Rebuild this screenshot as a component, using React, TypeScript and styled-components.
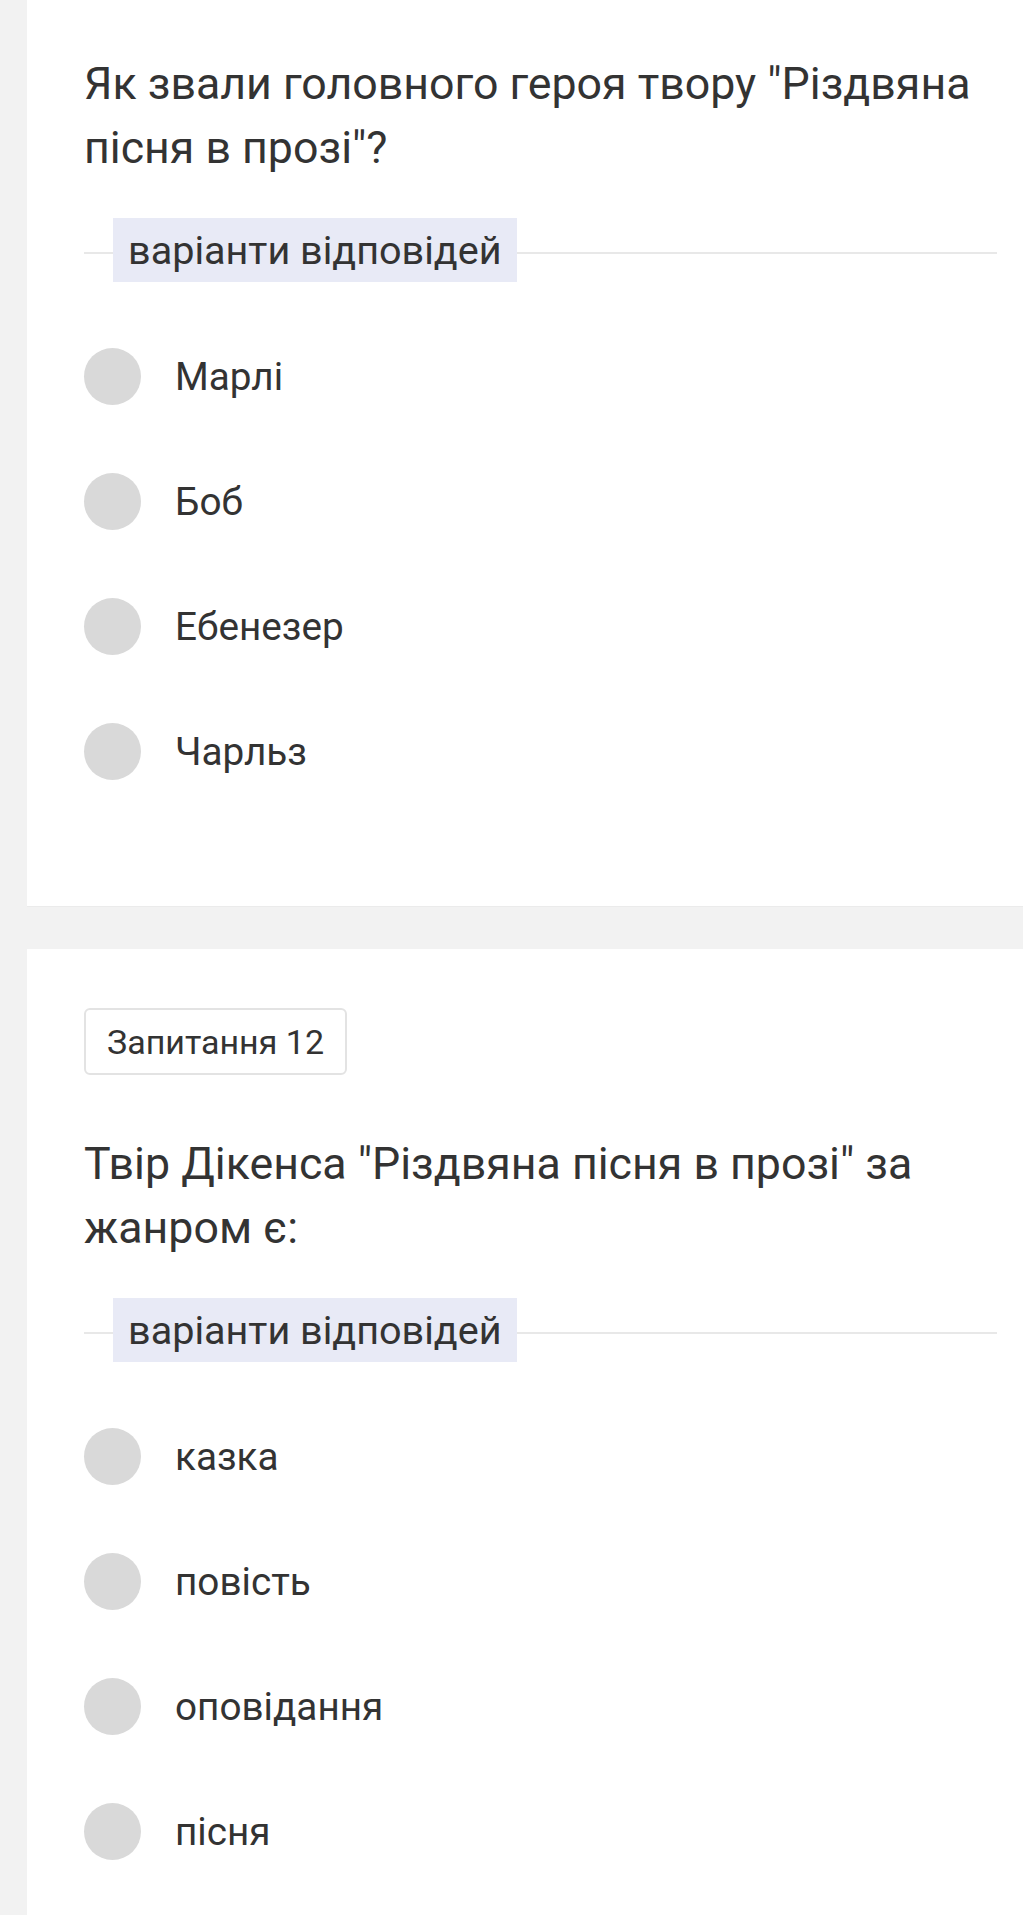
import React from "react"
import styled, { createGlobalStyle } from "styled-components"

const GlobalStyle = createGlobalStyle`
  html, body {
    margin: 0;
    padding: 0;
    background: #f2f2f2;
  }
  body {
    font-family: Roboto, "Noto Sans", "Liberation Sans", sans-serif;
    color: #333333;
  }
`

const Page = styled.div`
  padding-left: 27px;
  display: flex;
  flex-direction: column;
  gap: 42px;
`

const Card = styled.section<{ $top: number }>`
  background: #ffffff;
  padding: ${p => p.$top}px 26px 92px 57px;
  border-bottom: 1px solid #ebebeb;
`

const Badge = styled.div`
  box-sizing: border-box;
  display: inline-flex;
  align-items: center;
  height: 67px;
  padding: 0 21px;
  border: 2px solid #e3e3e3;
  border-radius: 6px;
  font-size: 34px;
  color: #333333;
  margin-bottom: 57px;
`

const Question = styled.h2`
  margin: 0 0 38px;
  font-weight: 400;
  font-size: 44.7px;
  line-height: 64px;
  color: #333333;
`

const Legend = styled.div`
  display: flex;
  align-items: center;
  height: 64px;

  &::before,
  &::after {
    content: "";
    height: 2px;
    margin-top: 6px;
    background: #e8e8e8;
  }
  &::before {
    width: 29px;
  }
  &::after {
    flex: 1;
  }
`

const LegendText = styled.span`
  box-sizing: border-box;
  height: 64px;
  display: flex;
  align-items: center;
  padding: 0 15px;
  background: #e8eaf6;
  font-size: 39.6px;
  color: #333333;
`

const Options = styled.ul`
  list-style: none;
  margin: 32px 0 0;
  padding: 0;
`

const Option = styled.li`
  display: flex;
  align-items: center;
  gap: 34px;
  height: 125px;
`

const Radio = styled.span`
  width: 57px;
  height: 57px;
  flex: none;
  border-radius: 50%;
  background: #d9d9d9;
`

const OptionText = styled.span`
  font-size: 38.7px;
  color: #333333;
`

type Item = {
  badge?: string
  question: string
  options: string[]
}

const items: Item[] = [
  {
    question: 'Як звали головного героя твору "Різдвяна пісня в прозі"?',
    options: ["Марлі", "Боб", "Ебенезер", "Чарльз"],
  },
  {
    badge: "Запитання 12",
    question: 'Твір Дікенса "Різдвяна пісня в прозі" за жанром є:',
    options: ["казка", "повість", "оповідання", "пісня"],
  },
]

const QuestionCard = ({ badge, question, options }: Item) => (
  <Card $top={badge ? 59 : 52}>
    {badge && (
      <div>
        <Badge>{badge}</Badge>
      </div>
    )}
    <Question>{question}</Question>
    <Legend>
      <LegendText>варіанти відповідей</LegendText>
    </Legend>
    <Options>
      {options.map(o => (
        <Option key={o}>
          <Radio />
          <OptionText>{o}</OptionText>
        </Option>
      ))}
    </Options>
  </Card>
)

export default function App() {
  return (
    <>
      <GlobalStyle />
      <Page>
        {items.map(item => (
          <QuestionCard key={item.question} {...item} />
        ))}
      </Page>
    </>
  )
}
